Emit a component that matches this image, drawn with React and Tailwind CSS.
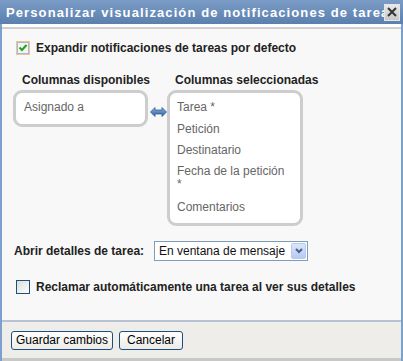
import React from "react";

const font = { fontFamily: '"Liberation Sans", Arial, sans-serif' };

const Checked = () => (
  <svg width="14" height="14" viewBox="0 0 14 14" className="shrink-0">
    <rect x="0.5" y="0.5" width="13" height="13" fill="#fff" stroke="#e08a2c" strokeDasharray="1 1" />
    <rect x="1.5" y="1.5" width="11" height="11" fill="#f4f4f0" stroke="#4c79b8" strokeDasharray="1 1" />
    <path d="M3.5 6.5 L6 9 L10.5 4" fill="none" stroke="#21a121" strokeWidth="2" />
  </svg>
);

const Unchecked = () => (
  <span className="block h-[14px] w-[14px] shrink-0 border border-[#1c5180] bg-gradient-to-br from-[#dcdcd7] to-white" />
);

const Swap = () => (
  <svg width="17" height="10" viewBox="0 0 17 10">
    <defs>
      <linearGradient id="ag" x1="0" y1="0" x2="0" y2="1">
        <stop offset="0" stopColor="#8fb4e0" />
        <stop offset="1" stopColor="#2b5f9e" />
      </linearGradient>
    </defs>
    <path d="M0.5 5 L5 0.5 L5 3 L12 3 L12 0.5 L16.5 5 L12 9.5 L12 7 L5 7 L5 9.5 Z" fill="url(#ag)" stroke="#2f5e96" strokeWidth="0.8" />
  </svg>
);

export default function App() {
  return (
    <div className="flex h-[361px] w-[403px] flex-col bg-[#7ca0cc]" style={font}>
      <div className="flex h-[24px] items-center bg-gradient-to-b from-[#7b9cc6] to-[#5a80ae] pl-[6px] pr-[3px]">
        <span className="flex-1 overflow-hidden whitespace-nowrap text-[13px] font-bold leading-none tracking-[1.1px] text-white">
          Personalizar visualización de notificaciones de tarea
        </span>
        <span className="-ml-[3px] flex h-[17px] w-[16px] shrink-0 items-center justify-center border border-[#e6e6e6] bg-gradient-to-b from-[#e8e8e8] to-[#c8c8c8]">
          <svg width="10" height="10" viewBox="0 0 10 10">
            <path d="M1 1 L9 9 M9 1 L1 9" stroke="#333" strokeWidth="2" />
          </svg>
        </span>
      </div>
      <div className="mx-[2px] flex flex-1 flex-col bg-white pt-[3px]">
        <div className="flex flex-1 flex-col border-t-2 border-[#cfcfcf] bg-[#f8f8f8] px-[10px] pt-[12px] text-[12px] leading-[14px] text-[#222]">
          <label className="flex items-center gap-[6px] pl-[4px] font-bold">
            <Checked />
            <span>Expandir notificaciones de tareas por defecto</span>
          </label>

          <div className="mt-[18px] ml-[1px] flex items-start">
            <div className="flex w-[135px] flex-col">
              <span className="whitespace-nowrap pl-[9px] font-bold">Columnas disponibles</span>
              <div className="mt-[3px] h-[37px] rounded-[9px] border-[3px] border-[#cdcdcd] bg-white pl-[8px] pt-[8px] leading-[13px] text-[#666]">
                Asignado a
              </div>
            </div>
            <div className="mt-[34px] ml-[2px] flex w-[17px] items-center justify-center">
              <Swap />
            </div>
            <div className="flex w-[136px] flex-col">
              <span className="whitespace-nowrap pl-[8px] font-bold">Columnas seleccionadas</span>
              <div className="mt-[3px] h-[136px] rounded-[9px] border-[3px] border-[#cdcdcd] bg-white pl-[7px] pr-[10px] pt-[8px] leading-[13px] text-[#666]">
                <div>Tarea *</div>
                <div className="mt-[9px]">Petición</div>
                <div className="mt-[8px]">Destinatario</div>
                <div className="mt-[8px]">Fecha de la petición *</div>
                <div className="mt-[10px]">Comentarios</div>
              </div>
            </div>
          </div>

          <div className="mt-[15px] flex items-center">
            <span className="w-[142px] pl-[2px] font-bold">Abrir detalles de tarea:</span>
            <div className="flex h-[20px] w-[154px] items-center border border-[#7f9db9] bg-white pl-[4px] pr-[1px]">
              <span className="flex-1 whitespace-nowrap text-[12px] text-[#111]">En ventana de mensaje</span>
              <span className="flex h-[16px] w-[15px] shrink-0 items-center justify-center rounded-[2px] border border-[#b8c9ea] bg-gradient-to-b from-[#dbe6fb] to-[#b5c9f2]">
                <svg width="8" height="6" viewBox="0 0 8 6">
                  <path d="M1 1 L4 4 L7 1" fill="none" stroke="#4d6185" strokeWidth="2" />
                </svg>
              </span>
            </div>
          </div>

          <label className="mt-[19px] flex items-center gap-[6px] pl-[4px] font-bold">
            <Unchecked />
            <span>Reclamar automáticamente una tarea al ver sus detalles</span>
          </label>
        </div>
        <div className="flex h-[38px] shrink-0 items-center gap-[6px] border-t-2 border-[#b7c3d3] bg-[#eeede9] pl-[9px]">
          <button className="h-[19px] w-[102px] rounded-[3px] border border-[#1c4f7f] bg-gradient-to-b from-white to-[#ecebe6] text-[12px] leading-none text-black">
            Guardar cambios
          </button>
          <button className="h-[19px] w-[64px] rounded-[3px] border border-[#1c4f7f] bg-gradient-to-b from-white to-[#ecebe6] text-[12px] leading-none text-black">
            Cancelar
          </button>
        </div>
        <div className="h-[3px] shrink-0 bg-[#c8c8c8]" />
      </div>
    </div>
  );
}
